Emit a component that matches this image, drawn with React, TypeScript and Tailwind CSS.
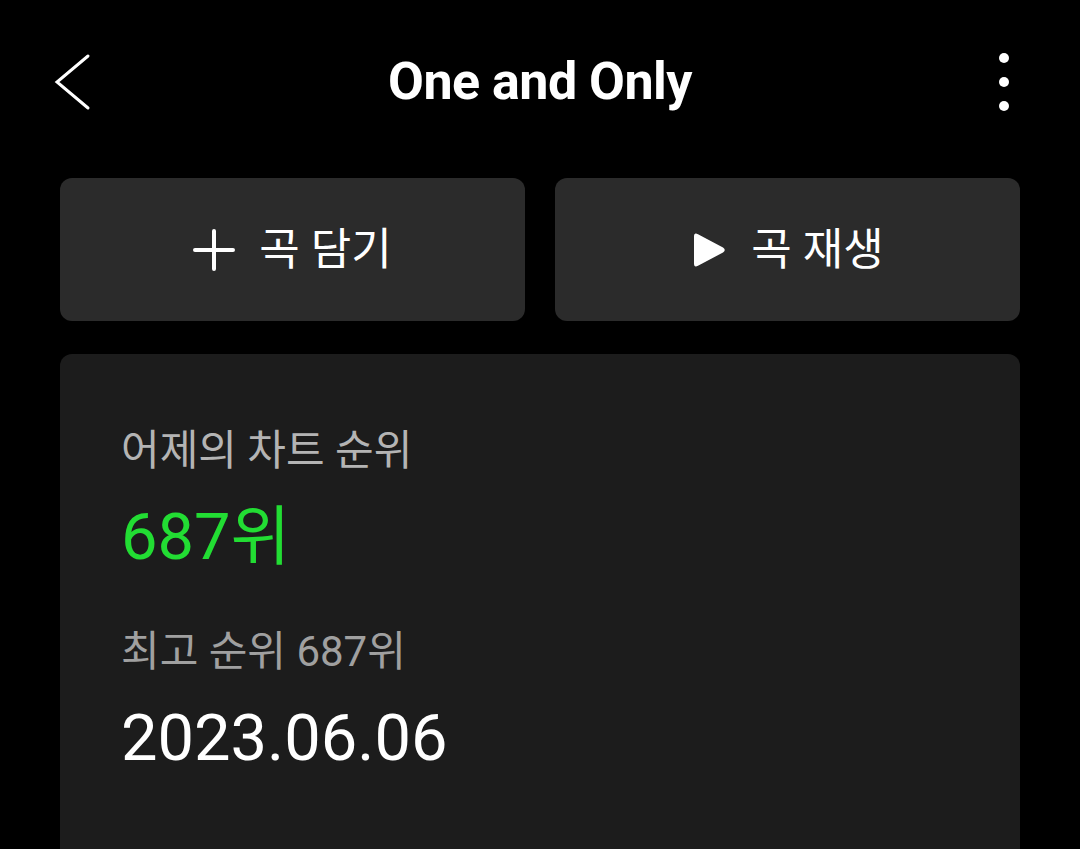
export default function App() {
  return (
    <div
      className="h-[849px] w-full overflow-hidden bg-black px-[60px] text-white"
      style={{ fontFamily: 'Roboto, "Noto Sans CJK KR", sans-serif' }}
    >
      {/* header */}
      <div className="grid h-[164px] grid-cols-[1fr_auto_1fr] items-center">
        <div className="flex items-center">
          <svg width="40" height="60" viewBox="0 0 40 60" className="-ml-[6px]">
            <polyline
              points="34,4 3,30 34,56"
              fill="none"
              stroke="white"
              strokeWidth="3"
              strokeLinecap="round"
              strokeLinejoin="miter"
            />
          </svg>
        </div>
        <h1 className="text-[52px] font-bold leading-none tracking-[-0.01em]">One and Only</h1>
        <div className="flex justify-end">
          <svg width="32" height="64" viewBox="0 0 32 64">
            <circle cx="16" cy="8" r="5" fill="white" />
            <circle cx="16" cy="32" r="5" fill="white" />
            <circle cx="16" cy="56" r="5" fill="white" />
          </svg>
        </div>
      </div>

      {/* actions */}
      <div className="mt-[14px] grid grid-cols-2 gap-[30px]">
        <button className="flex h-[143px] items-center justify-center gap-[24px] rounded-xl bg-[#2b2b2b]">
          <svg width="42" height="42" viewBox="0 0 42 42">
            <path d="M21 2v38M2 21h38" stroke="white" strokeWidth="4" strokeLinecap="round" />
          </svg>
          <span className="text-[44px] leading-none">곡 담기</span>
        </button>
        <button className="flex h-[143px] items-center justify-center gap-[24px] rounded-xl bg-[#2b2b2b]">
          <svg width="36" height="38" viewBox="0 0 36 38">
            <path
              d="M3 5.5 Q3 1 7 3.2 L32 16.5 Q35.5 19 32 21.5 L7 34.8 Q3 37 3 32.5 Z"
              fill="white"
            />
          </svg>
          <span className="text-[44px] leading-none">곡 재생</span>
        </button>
      </div>

      {/* chart card */}
      <div className="mt-[33px] h-[540px] rounded-xl bg-[#1c1c1c] pl-[61px] pt-[74px]">
        <div className="text-[42px] leading-[46px] text-[#b4b4b4]">어제의 차트 순위</div>
        <div className="mt-[27px] text-[65px] leading-[72px] text-[#22dd33]">687위</div>
        <div className="mt-[56px] text-[42px] leading-[46px] text-[#a0a0a0]">최고 순위 687위</div>
        <div className="mt-[27px] text-[65px] leading-[72px] text-white">2023.06.06</div>
      </div>
    </div>
  );
}
